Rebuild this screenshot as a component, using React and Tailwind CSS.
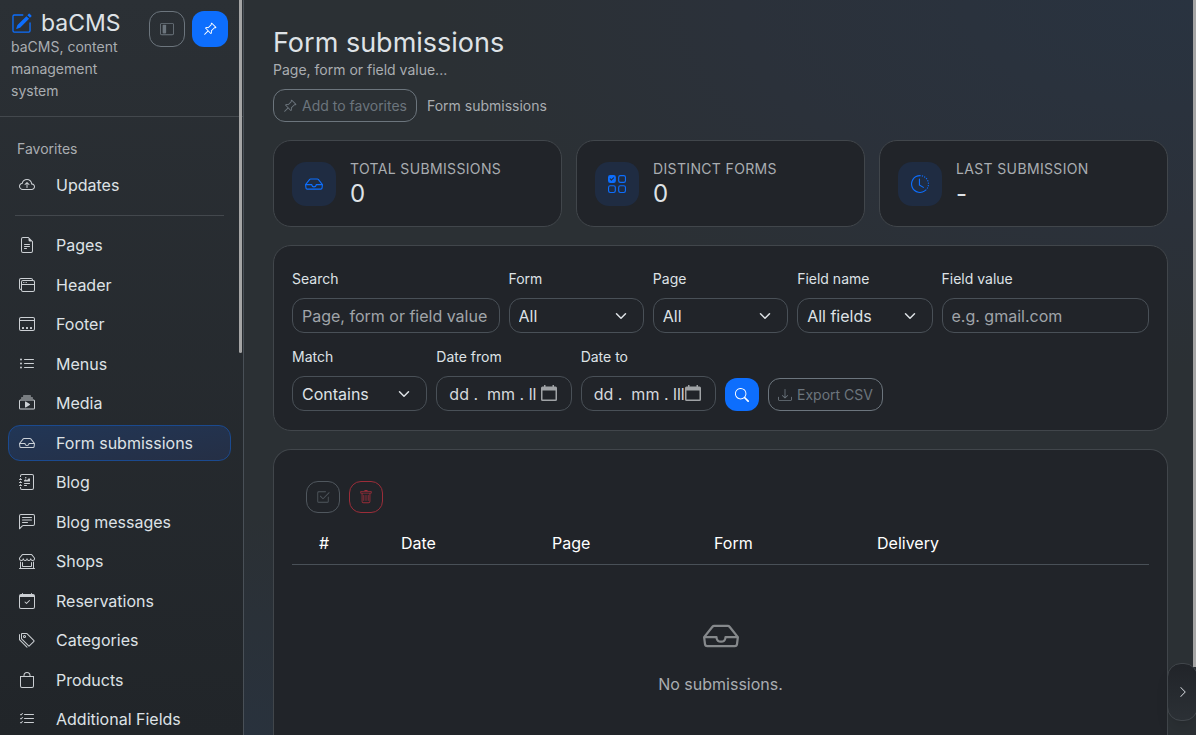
import React from 'react'
import {
  BsBag,
  BsCalendarCheck,
  BsChatLeftText,
  BsCheck2Square,
  BsChevronRight,
  BsClockHistory,
  BsCloudArrowUp,
  BsCollectionPlay,
  BsDownload,
  BsFileEarmarkText,
  BsInbox,
  BsJournalRichtext,
  BsLayoutSidebarInset,
  BsListCheck,
  BsListUl,
  BsPencilSquare,
  BsPinAngle,
  BsSearch,
  BsShopWindow,
  BsTags,
  BsTrash,
  BsUiChecksGrid,
  BsWindowDock,
  BsWindowStack
} from 'react-icons/bs'

const navItems = [
  { label: 'Pages', icon: BsFileEarmarkText },
  { label: 'Header', icon: BsWindowStack },
  { label: 'Footer', icon: BsWindowDock },
  { label: 'Menus', icon: BsListUl },
  { label: 'Media', icon: BsCollectionPlay },
  { label: 'Form submissions', icon: BsInbox, active: true },
  { label: 'Blog', icon: BsJournalRichtext },
  { label: 'Blog messages', icon: BsChatLeftText },
  { label: 'Shops', icon: BsShopWindow },
  { label: 'Reservations', icon: BsCalendarCheck },
  { label: 'Categories', icon: BsTags },
  { label: 'Products', icon: BsBag },
  { label: 'Additional Fields', icon: BsListCheck }
]

const stats = [
  { label: 'Total submissions', value: '0', icon: BsInbox },
  { label: 'Distinct forms', value: '0', icon: BsUiChecksGrid },
  { label: 'Last submission', value: '-', icon: BsClockHistory }
]

const NavItem = ({ label, icon: Icon, active }) => (
  <a
    href="#"
    aria-current={active ? 'page' : undefined}
    className={`flex h-9 items-center gap-[21px] rounded-xl border px-[10px] ${
      active ? 'border-[#1b4a8f] bg-linear-to-br from-[#213656] to-[#252f45]' : 'border-transparent'
    }`}
  >
    <Icon className="size-4 shrink-0 opacity-90" />
    <span>{label}</span>
  </a>
)

const Sidebar = () => (
  <aside className="relative flex w-[244px] shrink-0 flex-col overflow-hidden border-r border-[#495057] bg-linear-to-b from-[#2b3035] to-[#212529]">
    <div className="flex items-start justify-between border-b border-[#43484d] pt-[11px] pr-[15px] pb-[14px] pl-[11px]">
      <div className="w-[120px]">
        <div className="flex h-[25px] items-center gap-[9px] text-[23px]">
          <BsPencilSquare className="size-[21px] shrink-0 text-[#0d6efd]" />
          <span>baCMS</span>
        </div>
        <p className="text-sm leading-[22px] text-[#a9adb1]">baCMS, content management system</p>
      </div>
      <div className="flex gap-[7px]">
        <button
          type="button"
          aria-label="Collapse sidebar"
          className="flex size-9 items-center justify-center rounded-xl border border-[#6c757d] text-[#6c757d]"
        >
          <BsLayoutSidebarInset className="size-[14px]" />
        </button>
        <button
          type="button"
          aria-label="Pin sidebar"
          className="flex size-9 items-center justify-center rounded-xl bg-[#0d6efd] text-white"
        >
          <BsPinAngle className="size-[14px]" />
        </button>
      </div>
    </div>

    <nav className="flex flex-col pr-3 pl-2 pt-[21px]">
      <h2 className="px-[9px] text-sm leading-[22px] text-[#a9adb1]">Favorites</h2>
      <div className="mt-[7px]">
        <NavItem label="Updates" icon={BsCloudArrowUp} />
      </div>
      <hr className="mx-[7px] mt-3 mb-[11px] border-[#43484d]" />
      <div className="flex h-[510px] flex-col justify-between">
        {navItems.map((item) => (
          <NavItem key={item.label} {...item} />
        ))}
      </div>
    </nav>

    <div className="absolute top-0 right-px h-[353px] w-[3px] rounded-b-full bg-[#a5a5a5]" />
  </aside>
)

const StatCard = ({ label, value, icon: Icon }) => (
  <div className="flex items-center gap-[14px] rounded-[18px] border border-[#41464b] bg-[#212429] px-[18px] py-[18px]">
    <div className="flex size-11 shrink-0 items-center justify-center rounded-[14px] bg-[#1f2c42] text-[#0d6efd]">
      <Icon className="size-[18px]" />
    </div>
    <div>
      <div className="text-sm leading-[20px] tracking-wide text-[#a9adb1] uppercase">{label}</div>
      <div className="text-2xl leading-[29px]">{value}</div>
    </div>
  </div>
)

const fieldClass = 'h-[35px] w-full appearance-none rounded-xl border border-[#495057] bg-[#212429] px-[9px] text-base'

const Field = ({ id, label, className, children }) => (
  <div className={className}>
    <label htmlFor={id} className="mb-[9px] block text-sm leading-[21px]">
      {label}
    </label>
    {children}
  </div>
)

const Select = ({ id, value }) => (
  <div className="relative">
    <select id={id} className={fieldClass} defaultValue={value}>
      <option>{value}</option>
    </select>
    <svg
      viewBox="0 0 16 16"
      className="pointer-events-none absolute top-[12px] right-[17px] size-3 fill-none stroke-[#dee2e6] stroke-2"
      strokeLinecap="round"
      strokeLinejoin="round"
    >
      <path d="m2 5 6 6 6-6" />
    </svg>
  </div>
)

const DateInput = ({ id, text }) => (
  <div className="relative">
    <input id={id} type="text" placeholder={text} className={`${fieldClass} pl-3 placeholder:text-[#d6d9dd]`} />
    <svg viewBox="0 0 16 16" className="pointer-events-none absolute top-[9px] right-[15px] size-4 fill-[#a0a3a6]">
      <path
        fillRule="evenodd"
        d="M3 0h1.500v1.500h7V0H13v1.500h1.500Q16 1.500 16 3v11.500q0 1.500-1.500 1.500h-13Q0 16 0 14.500V3q0-1.500 1.500-1.500H3zM1.500 5.500v9h13v-9z"
      />
    </svg>
  </div>
)

const Filters = () => (
  <form className="mt-[18px] grid grid-cols-12 gap-x-[9px] gap-y-[13px] rounded-[18px] border border-[#41464b] bg-[#212429] px-[18px] pt-[22px] pb-[19px]">
    <Field id="search" label="Search" className="col-span-3">
      <input id="search" type="text" placeholder="Page, form or field value" className={`${fieldClass} placeholder:text-[#a0a4a9]`} />
    </Field>
    <Field id="form" label="Form" className="col-span-2">
      <Select id="form" value="All" />
    </Field>
    <Field id="page" label="Page" className="col-span-2">
      <Select id="page" value="All" />
    </Field>
    <Field id="field-name" label="Field name" className="col-span-2">
      <Select id="field-name" value="All fields" />
    </Field>
    <Field id="field-value" label="Field value" className="col-span-3">
      <input id="field-value" type="text" placeholder="e.g. gmail.com" className={`${fieldClass} placeholder:text-[#a0a4a9]`} />
    </Field>
    <Field id="match" label="Match" className="col-span-2">
      <Select id="match" value="Contains" />
    </Field>
    <Field id="date-from" label="Date from" className="col-span-2">
      <DateInput id="date-from" text="dd .  mm . ll" />
    </Field>
    <Field id="date-to" label="Date to" className="col-span-2">
      <DateInput id="date-to" text="dd .  mm . lll" />
    </Field>
    <div className="col-span-6 flex items-end gap-[9px]">
      <button
        type="submit"
        aria-label="Search submissions"
        className="flex h-[33px] w-[34px] items-center justify-center rounded-xl bg-[#0d6efd] text-white"
      >
        <BsSearch className="size-[14px]" />
      </button>
      <button
        type="button"
        className="flex h-[33px] items-center gap-[5px] rounded-xl border border-[#6c757d] px-[9px] text-sm text-[#6c757d]"
      >
        <BsDownload className="size-[14px]" />
        Export CSV
      </button>
    </div>
  </form>
)

const Submissions = () => (
  <section className="mt-[18px] flex-1 rounded-t-[18px] border border-b-0 border-[#41464b] bg-[#212429] px-[18px] pt-[31px]">
    <div className="flex gap-[9px] px-[14px]">
      <button
        type="button"
        disabled
        aria-label="Select all"
        className="flex h-8 w-[34px] items-center justify-center rounded-xl border border-[#50575e] text-[#50575e]"
      >
        <BsCheck2Square className="size-[14px]" />
      </button>
      <button
        type="button"
        disabled
        aria-label="Delete selected"
        className="flex h-8 w-[34px] items-center justify-center rounded-xl border border-[#9b2d39] text-[#9b2d39]"
      >
        <BsTrash className="size-[14px]" />
      </button>
    </div>

    <table className="mt-[9px] w-full table-fixed text-left">
      <thead className="text-white">
        <tr className="h-[42px] border-b border-[#495057]">
          <th className="w-[100px] pl-[27px] font-normal">#</th>
          <th className="w-[151px] px-[9px] font-normal">Date</th>
          <th className="w-[162px] px-[9px] font-normal">Page</th>
          <th className="w-[163px] px-[9px] font-normal">Form</th>
          <th className="px-[9px] font-normal">Delivery</th>
        </tr>
      </thead>
      <tbody>
        <tr>
          <td colSpan={5} className="py-[53px] text-center text-[#a9adb1]">
            <BsInbox className="mx-auto mb-[18px] size-9 text-[#85888b]" />
            No submissions.
          </td>
        </tr>
      </tbody>
    </table>
  </section>
)

const App = () => (
  <div className="flex h-screen overflow-hidden bg-[#2b3034] font-[Inter,sans-serif] text-base text-[#dee2e6]">
    <Sidebar />
    <main className="relative flex min-w-0 flex-1 flex-col overflow-hidden bg-[radial-gradient(80%_50%_at_100%_0%,#293340_0%,#2b313a_60%,transparent_100%),radial-gradient(40%_30%_at_0%_100%,#29323d_0%,transparent_100%)] pt-[26px] pr-7 pl-[29px]">
      <h1 className="text-[27px] leading-[33px]">Form submissions</h1>
      <p className="text-sm leading-[22px] text-[#a9adb1]">Page, form or field value...</p>
      <div className="mt-2 flex items-center gap-[10px] text-sm text-[#a9adb1]">
        <button type="button" className="flex h-[33px] items-center gap-[5px] rounded-xl border border-[#6c757d] px-[9px] text-[#6c757d]">
          <BsPinAngle className="size-[14px]" />
          Add to favorites
        </button>
        <span>Form submissions</span>
      </div>

      <div className="mt-[18px] grid grid-cols-3 gap-[14px]">
        {stats.map((stat) => (
          <StatCard key={stat.label} {...stat} />
        ))}
      </div>

      <Filters />
      <Submissions />

      <div className="absolute top-0 right-0 h-[667px] w-[3px] bg-[#a5a5a5]" />
    </main>

    <button
      type="button"
      aria-label="Open panel"
      className="fixed right-[-2px] bottom-[14px] flex h-[58px] w-[31px] items-center justify-center rounded-[14px] border border-[#41464b] bg-linear-to-b from-[#212429] to-[#2b3035] shadow-lg"
    >
      <BsChevronRight className="size-3" />
    </button>
  </div>
)

export default App
